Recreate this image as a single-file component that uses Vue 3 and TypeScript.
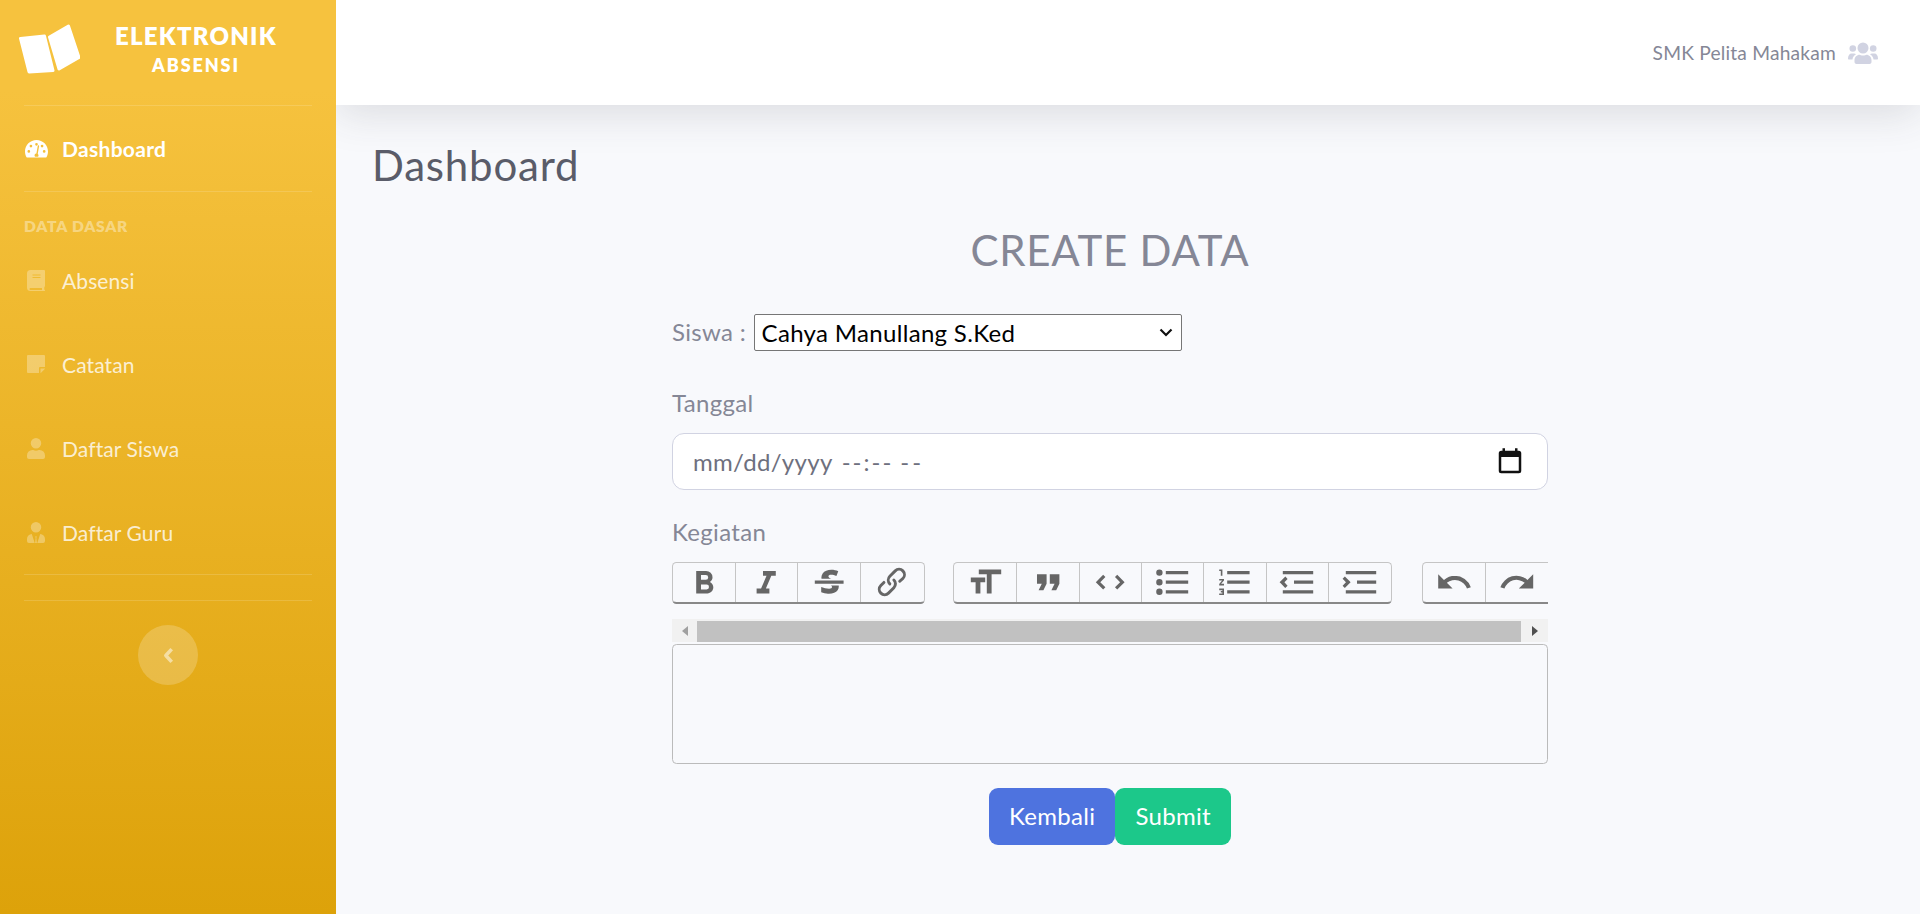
<script setup lang="ts">
interface MenuItem {
  label: string;
  icon: string;
  view: string;
}

const menu: MenuItem[] = [
  { label: 'Absensi', icon: 'book', view: '0 0 18 21' },
  { label: 'Catatan', icon: 'note', view: '0 0 18 18' },
  { label: 'Daftar Siswa', icon: 'user', view: '0 0 18 21' },
  { label: 'Daftar Guru', icon: 'tie', view: '0 0 18 21' }
];
</script>

<template>
  <div class="page">
    <aside class="sidebar">
      <div class="brand">
        <svg class="brand-icon" viewBox="0 0 61 50">
          <path d="M1.500 14.500 L25.500 12 L34 46.500 L10 48 Z" fill="#fff" stroke="#fff" stroke-width="3" stroke-linejoin="round" />
          <path d="M30.500 13 L49.500 2 L60 33.500 L40 45 Z" fill="#fff" stroke="#fff" stroke-width="3" stroke-linejoin="round" />
        </svg>
        <div class="brand-text">
          <div class="brand-title">ELEKTRONIK</div>
          <div class="brand-sub">ABSENSI</div>
        </div>
      </div>
      <hr class="divider" />
      <a class="nav-item active">
        <svg class="nav-icon wide" viewBox="0 0 24 24">
          <path fill="#fff" fill-rule="evenodd" d="M12 3C5.400 3 0 8.300 0 15c0 2.200.6 4.300 1.600 6 .2.300.6.500 1 .5h18.800c.4 0 .8-.2 1-.5 1-1.700 1.600-3.800 1.600-6 0-6.700-5.400-12-12-12zm0 3.200a1.400 1.400 0 1 1 0 2.800 1.400 1.400 0 0 1 0-2.800zM4 16.400a1.400 1.400 0 1 1 0-2.800 1.400 1.400 0 0 1 0 2.800zm2.200-5.500a1.400 1.400 0 1 1 0-2.800 1.400 1.400 0 0 1 0 2.800zM20 16.400a1.400 1.400 0 1 1 0-2.800 1.400 1.400 0 0 1 0 2.800zm-2.200-5.500a1.400 1.400 0 1 1 0-2.800 1.400 1.400 0 0 1 0 2.800zM14.700 9.600l-1.400 7.800c.5.500.8 1.100.8 1.800 0 .5-.2 1-.5 1.300h-3.200a2.100 2.100 0 0 1 1.500-3.400l1.400-7.800c.1-.4.400-.7.800-.6.400 0 .7.400.6.900z" />
        </svg>
        <span>Dashboard</span>
      </a>
      <hr class="divider" />
      <div class="nav-heading">DATA DASAR</div>
      <a v-for="item in menu" :key="item.label" class="nav-item">
        <svg class="nav-icon" :class="{ short: item.icon === 'note' }" :viewBox="item.view">
          <path v-if="item.icon === 'book'" fill="#fff" fill-opacity=".3" fill-rule="evenodd" d="M3.500 0H17a1 1 0 0 1 1 1v15c0 .4-.3.800-.6 1-.2.800-.2 2 0 2.700.3.200.6.500.6.800v.500H3.500A3.500 3.500 0 0 1 0 17.500v-14A3.500 3.500 0 0 1 3.500 0zM5.500 4.500v1h8v-1zM5.500 7v1h8V7zM3.500 18a1 1 0 0 0 0 2h11.500v-2z" />
          <path v-else-if="item.icon === 'note'" fill="#fff" fill-opacity=".3" d="M1 0h16a1 1 0 0 1 1 1v11h-5a1 1 0 0 0-1 1v5H1a1 1 0 0 1-1-1V1a1 1 0 0 1 1-1zM18 13.500v.3l-4.200 4.200h-.3v-4.500z" />
          <path v-else-if="item.icon === 'user'" fill="#fff" fill-opacity=".3" d="M9 10.500A5.200 5.200 0 1 0 9 0a5.200 5.200 0 0 0 0 10.500zM12.600 12h-.9a6.300 6.300 0 0 1-5.400 0h-.9A5.400 5.400 0 0 0 0 17.400v1.600A2 2 0 0 0 2 21h14a2 2 0 0 0 2-2v-1.600A5.400 5.400 0 0 0 12.600 12z" />
          <path v-else fill="#fff" fill-opacity=".3" d="M9 10.500A5.200 5.200 0 1 0 9 0a5.200 5.200 0 0 0 0 10.500zM13.200 12L10.300 21h-.4l-.6-5.200.8-1.300H7.900l.8 1.300-.6 5.200h-.4L4.800 12A5 5 0 0 0 0 17v2a2 2 0 0 0 2 2h14a2 2 0 0 0 2-2v-2a5 5 0 0 0-4.800-5z" />
        </svg>
        <span>{{ item.label }}</span>
      </a>
      <hr class="divider last" />
      <hr class="divider end" />
      <div class="toggle-wrap">
        <button class="toggle" type="button">
          <svg viewBox="0 0 10 16" width="11" height="17">
            <path d="M8 2 L2.500 8 L8 14" fill="none" stroke="#fff" stroke-opacity=".5" stroke-width="3.400" stroke-linejoin="round" />
          </svg>
        </button>
      </div>
    </aside>

    <div class="main">
      <header class="topbar">
        <span class="user-name">SMK Pelita Mahakam</span>
        <svg class="user-icon" viewBox="0 0 30 22">
          <g fill="#d1d3e2">
            <circle cx="15" cy="6" r="5.500" />
            <circle cx="4.800" cy="6.500" r="3.300" />
            <circle cx="25.200" cy="6.500" r="3.300" />
            <path d="M8.500 22c-1 0-2-.8-2-2v-2c0-3 2.500-5.300 5-5.300 1 0 1.500.8 3.500.8s2.500-.8 3.500-.8c2.500 0 5 2.300 5 5.300v2c0 1.200-1 2-2 2z" />
            <path d="M0 16.500c0-3 1.500-5 3.500-5h2.500c.8 0 1.500.3 2 .8-2 1-3.300 3-3.500 5.200H1c-.6 0-1-.4-1-1zM30 16.500c0-3-1.500-5-3.500-5H24c-.8 0-1.500.3-2 .8 2 1 3.300 3 3.500 5.200H29c.6 0 1-.4 1-1z" />
          </g>
        </svg>
      </header>

      <main class="content">
        <h1 class="page-title">Dashboard</h1>

        <form class="form" @submit.prevent>
          <h3 class="form-title">CREATE DATA</h3>

          <div class="siswa-row">
            <label class="siswa-label">Siswa :</label>
            <div class="select-wrap">
              <select class="siswa-select">
                <option>Cahya Manullang S.Ked</option>
              </select>
              <svg class="chevron" viewBox="0 0 14 9">
                <path d="M1.500 1.500L7 7l5.500-5.500" fill="none" stroke="#111" stroke-width="2.200" />
              </svg>
            </div>
          </div>

          <label class="field-label">Tanggal</label>
          <div class="date-input">
            <span class="date-mask">mm/dd/yyyy</span>
            <span class="date-time">--:--</span>
            <span class="date-time ampm">--</span>
            <svg class="calendar" viewBox="0 0 24 24">
              <path fill="#111" d="M19 3h-1V1h-2v2H8V1H6v2H5a2 2 0 0 0-2 2v14a2 2 0 0 0 2 2h14a2 2 0 0 0 2-2V5a2 2 0 0 0-2-2zm0 16H5V8h14z" />
            </svg>
          </div>

          <label class="field-label kegiatan">Kegiatan</label>
          <div class="toolbar-scroll">
            <div class="toolbar">
              <div class="tool-group">
                <span class="tool" style="width: 63px">
                  <svg viewBox="0 0 24 24"><path d="M15.600 11.800c1-.7 1.600-1.800 1.600-2.800a4 4 0 0 0-4-4H7v14h7c2.100 0 3.700-1.700 3.700-3.800 0-1.500-.8-2.800-2.100-3.400zM10 7.500h3a1.500 1.500 0 1 1 0 3h-3v-3zm3.500 9H10v-3h3.500a1.500 1.500 0 1 1 0 3z" /></svg>
                </span>
                <span class="tool" style="width: 62px">
                  <svg viewBox="0 0 24 24"><path d="M10 5v3h2.200l-3.400 8H6v3h8v-3h-2.200l3.400-8H18V5h-8z" /></svg>
                </span>
                <span class="tool" style="width: 63px">
                  <svg viewBox="0 0 24 24"><path d="M12.730 14l.28.14c.26.15.45.3.57.44.12.14.18.3.18.5 0 .3-.15.56-.44.75-.3.2-.76.3-1.390.3A13.520 13.520 0 0 1 7 14.950v3.370a10.640 10.640 0 0 0 4.840.88c1.260 0 2.350-.19 3.280-.56.93-.37 1.640-.9 2.140-1.570s.74-1.450.74-2.320c0-.26-.02-.51-.06-.75h-5.210zM7.250 10c-.08-.3-.13-.6-.13-.95 0-.98.27-1.830.8-2.550.53-.72 1.270-1.270 2.220-1.650.95-.38 2.020-.57 3.220-.57 1.600 0 3.030.37 4.300.9l-1.150 2.900c-1.200-.5-2.200-.78-3.220-.78-.62 0-1.070.1-1.360.3-.28.2-.42.45-.42.75 0 .3.18.57.53.82.2.13.6.36 1.200.64H7.250zM3 13h18v-2H3v2z" /></svg>
                </span>
                <span class="tool last" style="width: 63px">
                  <svg viewBox="0 0 24 24"><path d="M9.880 13.700a4.300 4.300 0 0 1 0-6.070l3.370-3.370a4.260 4.260 0 0 1 6.070 0 4.300 4.300 0 0 1 0 6.060l-1.960 1.720a.91.91 0 1 1-1.300-1.300l1.970-1.710a2.460 2.460 0 0 0-3.480-3.480l-3.380 3.370a2.460 2.460 0 0 0 0 3.480.91.91 0 1 1-1.300 1.300z" /><path d="M4.250 19.460a4.300 4.300 0 0 1 0-6.070l1.930-1.900a.91.91 0 1 1 1.300 1.300l-1.930 1.900a2.460 2.460 0 0 0 3.480 3.480l3.370-3.380c.96-.96.96-2.520 0-3.480a.91.91 0 1 1 1.300-1.300 4.300 4.300 0 0 1 0 6.070l-3.380 3.380a4.260 4.260 0 0 1-6.070 0z" /></svg>
                </span>
              </div>
              <div class="tool-group">
                <span class="tool" style="width: 63px">
                  <svg viewBox="0 0 24 24"><path d="M12 9v3H9v7H6v-7H3V9h9zM8 4h14v3h-6v12h-3V7H8V4z" /></svg>
                </span>
                <span class="tool" style="width: 63px">
                  <svg viewBox="0 0 24 24"><path d="M6 17h3l2-4V7H5v6h3zm8 0h3l2-4V7h-6v6h3z" /></svg>
                </span>
                <span class="tool" style="width: 62px">
                  <svg viewBox="0 0 24 24"><path d="M18.200 12L15 15.200l1.400 1.400L21 12l-4.600-4.600L15 8.800 18.200 12zM5.800 12L9 8.800 7.600 7.400 3 12l4.600 4.600L9 15.200 5.800 12z" /></svg>
                </span>
                <span class="tool" style="width: 62px">
                  <svg viewBox="0 0 24 24"><path d="M4 4a2 2 0 1 0 0 4 2 2 0 0 0 0-4zm0 6a2 2 0 1 0 0 4 2 2 0 0 0 0-4zm0 6a2 2 0 1 0 0 4 2 2 0 0 0 0-4zm4 3h14v-2H8v2zm0-6h14v-2H8v2zm0-8v2h14V5H8z" /></svg>
                </span>
                <span class="tool" style="width: 63px">
                  <svg viewBox="0 0 24 24"><path d="M2 17h2v.5H3v1h1v.5H2v1h3v-4H2v1zm1-9h1V4H2v1h1v3zm-1 3h1.800L2 13.100v.9h3v-1H3.200L5 10.900V10H2v1zm5-6v2h14V5H7zm0 14h14v-2H7v2zm0-6h14v-2H7v2z" /></svg>
                </span>
                <span class="tool" style="width: 62px">
                  <svg viewBox="0 0 24 24"><path d="M3 19h19v-2H3v2zm7-6h12v-2H10v2zm-8.300-.3l2.800 2.900L6 14.200 4 12l2-2-1.400-1.500L1 12l.7.700zM3 5v2h19V5H3z" /></svg>
                </span>
                <span class="tool last" style="width: 62px">
                  <svg viewBox="0 0 24 24"><path d="M3 19h19v-2H3v2zm7-6h12v-2H10v2zm-6.900-1L1 14.200l1.400 1.400L6 12l-.7-.7-2.900-2.900L1 9.800 3.100 12zM3 5v2h19V5H3z" /></svg>
                </span>
              </div>
              <div class="tool-group clipped">
                <span class="tool" style="width: 63px">
                  <svg viewBox="0 0 24 24"><path d="M12.500 8c-2.600 0-5 1-6.900 2.600L2 7v9h9l-3.600-3.600A8 8 0 0 1 20 16l2.400-.8a10.500 10.500 0 0 0-10-7.200z" /></svg>
                </span>
                <span class="tool open" style="width: 63px">
                  <svg viewBox="0 0 24 24"><path d="M18.400 10.600a10.500 10.500 0 0 0-16.900 4.600L4 16a8 8 0 0 1 12.700-3.600L13 16h9V7l-3.600 3.600z" /></svg>
                </span>
              </div>
            </div>
          </div>
          <div class="fake-scrollbar">
            <span class="arrow left"></span>
            <div class="thumb"></div>
            <span class="arrow right"></span>
          </div>
          <div class="editor"></div>

          <div class="actions">
            <button class="btn btn-blue" type="button">Kembali</button>
            <button class="btn btn-green" type="submit">Submit</button>
          </div>
        </form>
      </main>
    </div>
  </div>
</template>

<style>
html,
body {
  margin: 0;
  padding: 0;
  background: #f8f9fc;
}
</style>

<style scoped>
.page {
  display: flex;
  height: 914px;
  overflow: hidden;
  font-family: 'Lato', 'Noto Sans', sans-serif;
  letter-spacing: 0.02em;
  color: #858796;
}

.sidebar {
  width: 336px;
  flex-shrink: 0;
  padding: 0 24px;
  box-sizing: border-box;
  background: linear-gradient(180deg, #f6c23e 10%, #dda20a 100%);
  color: #fff;
  position: relative;
  z-index: 1;
}

.brand {
  height: 105px;
  box-sizing: border-box;
  padding-bottom: 7px;
  margin: 0 -5px;
  display: flex;
  align-items: center;
  gap: 32px;
}

.brand-icon {
  width: 61px;
  height: 50px;
  flex-shrink: 0;
}

.brand-text {
  width: 168px;
  text-align: center;
  font-weight: 800;
  letter-spacing: 1.200px;
}

.brand-title {
  font-size: 24px;
  line-height: 30px;
}

.brand-sub {
  margin-top: 2px;
  font-size: 18px;
  line-height: 24px;
  letter-spacing: 1.900px;
}

.divider {
  margin: 0;
  border: 0;
  border-top: 1.500px solid rgba(255, 255, 255, 0.15);
}

.nav-item {
  height: 84px;
  display: flex;
  align-items: center;
  color: rgba(255, 255, 255, 0.8);
  font-size: 21px;
  letter-spacing: 0.1px;
}

.nav-item.active {
  height: 85px;
  color: #fff;
  font-weight: 700;
  letter-spacing: 0.3px;
}

.nav-icon {
  width: 18px;
  height: 21px;
  margin: 0 17px 0 3px;
  flex-shrink: 0;
}

.nav-icon.short {
  height: 18px;
}

.nav-icon.wide {
  width: 23px;
  height: 23px;
  margin: 0 14px 0 1px;
}

.nav-heading {
  height: 50px;
  padding-top: 27px;
  box-sizing: border-box;
  margin-bottom: -4px;
  font-size: 15.600px;
  line-height: 15px;
  font-weight: 800;
  letter-spacing: 0.05em;
  color: rgba(255, 255, 255, 0.4);
}

.divider.end {
  margin-top: 25px;
}

.toggle-wrap {
  display: flex;
  justify-content: center;
  margin-top: 24px;
}

.toggle {
  width: 60px;
  height: 60px;
  border: 0;
  padding: 0;
  border-radius: 50%;
  background: rgba(255, 255, 255, 0.2);
  display: flex;
  align-items: center;
  justify-content: center;
}

.main {
  flex: 1;
  min-width: 0;
  display: flex;
  flex-direction: column;
}

.topbar {
  height: 105px;
  flex-shrink: 0;
  box-sizing: border-box;
  padding-right: 42px;
  display: flex;
  align-items: center;
  justify-content: flex-end;
  gap: 12px;
  background: #fff;
  box-shadow: 0 9px 42px rgba(58, 59, 69, 0.15);
}

.user-name {
  font-size: 19.200px;
  letter-spacing: 0.2px;
}

.user-icon {
  width: 30px;
  height: 22px;
}

.content {
  flex: 1;
  padding: 0 36px;
}

.page-title {
  margin: 35px 0 0;
  font-size: 42px;
  line-height: 50px;
  font-weight: 400;
  letter-spacing: 0.8px;
  color: #5a5c69;
}

.form {
  width: 876px;
  margin: 35px 0 0 300px;
  font-size: 24px;
}

.form-title {
  margin: 0 0 39px;
  text-align: center;
  font-size: 42px;
  line-height: 50px;
  font-weight: 400;
  letter-spacing: 0.75px;
}

.siswa-row {
  display: flex;
  align-items: center;
  gap: 7.500px;
  height: 37px;
}

.siswa-label {
  padding-bottom: 3px;
}

.select-wrap {
  position: relative;
}

.siswa-select {
  display: block;
  width: 428px;
  height: 37px;
  padding: 0 7px;
  box-sizing: border-box;
  appearance: none;
  font: inherit;
  letter-spacing: inherit;
  color: #000;
  background: #fff;
  border: 1px solid #767676;
  border-radius: 2px;
}

.chevron {
  position: absolute;
  right: 9px;
  top: 14px;
  width: 14px;
  height: 9px;
  pointer-events: none;
}

.field-label {
  display: block;
  margin-top: 34px;
  line-height: 36px;
}

.field-label.kegiatan {
  margin-top: 24px;
}

.date-input {
  margin-top: 12px;
  height: 57px;
  box-sizing: border-box;
  padding: 0 20px;
  display: flex;
  align-items: center;
  background: #fff;
  border: 1.500px solid #d1d3e2;
  border-radius: 12px;
}

.date-mask {
  color: #6e707e;
}

.date-time {
  margin-left: 9px;
  color: #6e707e;
  letter-spacing: 2px;
}

.date-time.ampm {
  margin-left: 7px;
  letter-spacing: 3px;
}

.calendar {
  width: 30px;
  height: 30px;
  margin-left: auto;
  margin-right: 2.500px;
}

.toolbar-scroll {
  margin-top: 12px;
  height: 42px;
  overflow: hidden;
}

.toolbar {
  display: flex;
  gap: 28px;
  width: max-content;
}

.tool-group {
  display: flex;
  height: 42px;
  box-sizing: border-box;
  border: 1.500px solid #c5c5c5;
  border-bottom: 2px solid #888;
  border-radius: 4.500px;
}

.tool-group.clipped {
  margin-left: 2px;
  border-radius: 4.500px 0 0 4.500px;
}

.tool {
  display: flex;
  align-items: center;
  justify-content: center;
  box-sizing: border-box;
  border-right: 1.500px solid #c5c5c5;
}

.tool.last,
.tool.open {
  border-right: 0;
}

.tool svg {
  width: 38.400px;
  height: 38.400px;
  flex-shrink: 0;
  fill: #666;
}

.fake-scrollbar {
  margin-top: 15px;
  height: 23px;
  box-sizing: border-box;
  padding-top: 1.500px;
  display: flex;
  background: #f1f1f1;
}

.thumb {
  flex: 1;
  background: #c1c1c1;
}

.arrow {
  width: 25px;
  display: flex;
  align-items: center;
  justify-content: center;
}

.arrow.right {
  width: 27px;
}

.arrow::before {
  content: '';
  border-top: 5.500px solid transparent;
  border-bottom: 5.500px solid transparent;
}

.arrow.left::before {
  border-right: 6px solid #a0a0a0;
}

.arrow.right::before {
  border-left: 6px solid #505050;
}

.editor {
  margin-top: 2px;
  height: 120px;
  box-sizing: border-box;
  border: 1.500px solid #bbb;
  border-radius: 4.500px;
}

.actions {
  margin-top: 24px;
  display: flex;
  justify-content: center;
}

.btn {
  height: 57px;
  padding: 0 20px 2px;
  border: 0;
  border-radius: 9px;
  font: inherit;
  letter-spacing: inherit;
  color: #fff;
}

.btn-blue {
  background: #4e73df;
}

.btn-green {
  background: #1cc88a;
}
</style>
